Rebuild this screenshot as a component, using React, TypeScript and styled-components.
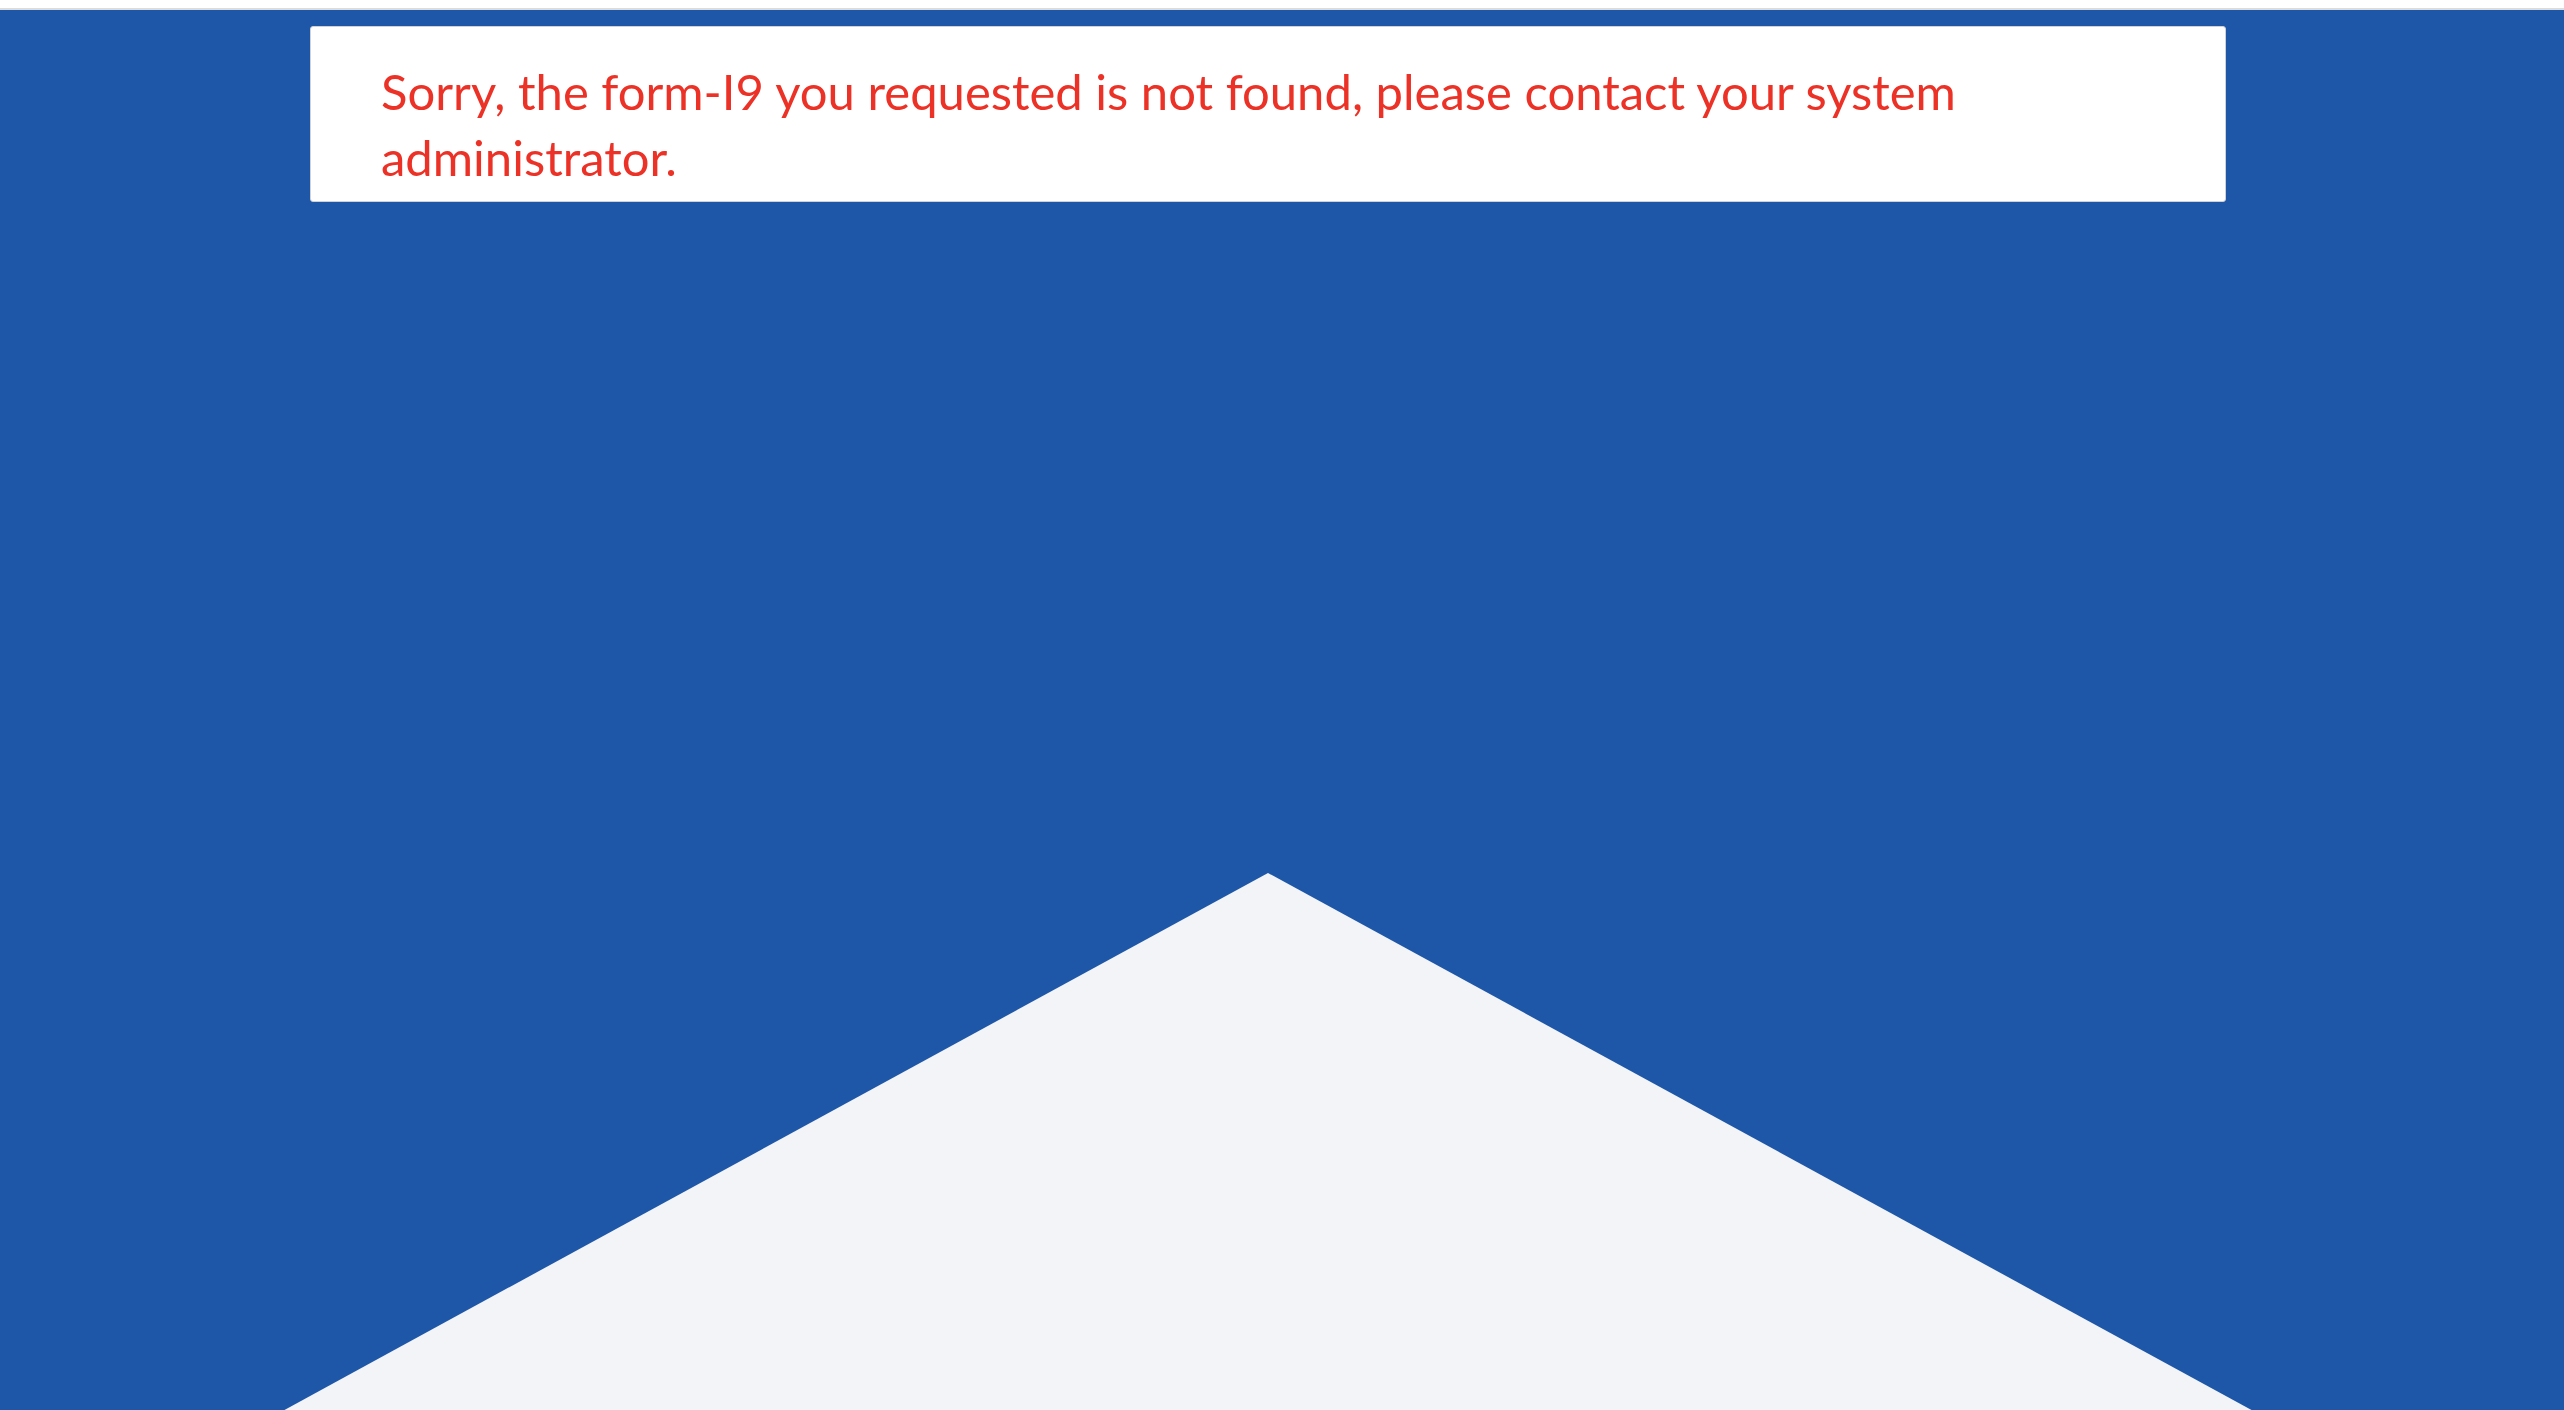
import React from "react";
import styled, { createGlobalStyle } from "styled-components";

const GlobalStyle = createGlobalStyle`
  html, body {
    margin: 0;
    padding: 0;
    background: #ffffff;
    overflow: hidden;
  }
  body {
    font-family: "Lato", "Open Sans", sans-serif;
  }
`;

const TopStrip = styled.div`
  height: 8px;
  background: #ffffff;
  border-bottom: 2px solid #dcdcdc;
`;

const BluePage = styled.main`
  height: 1400px;
  background: #1e57a8;
  overflow: hidden;
`;

const Stage = styled.div`
  width: 2536px;
  display: flex;
  flex-direction: column;
  align-items: center;
  padding-top: 16px;
`;

const Card = styled.section`
  box-sizing: border-box;
  width: 1916px;
  height: 176px;
  background: #ffffff;
  border: 1px solid #d2d2d2;
  border-radius: 3px;
  padding: 31px 70px 0 70px;
`;

const ErrorText = styled.p`
  margin: 0;
  color: #ec3226;
  font-family: "Lato", "Open Sans", sans-serif;
  font-size: 49px;
  line-height: 66px;
  font-weight: 400;
`;

const Peak = styled.div`
  width: 1978px;
  height: 540px;
  margin-top: 671px;
  flex-shrink: 0;
  background: #f2f4f8;
  clip-path: polygon(50% 0, 100% 100%, 0 100%);
`;

export default function App() {
  return (
    <>
      <GlobalStyle />
      <TopStrip />
      <BluePage>
        <Stage>
          <Card>
            <ErrorText>
              Sorry, the form-I9 you requested is not found, please contact your system administrator.
            </ErrorText>
          </Card>
          <Peak />
        </Stage>
      </BluePage>
    </>
  );
}
